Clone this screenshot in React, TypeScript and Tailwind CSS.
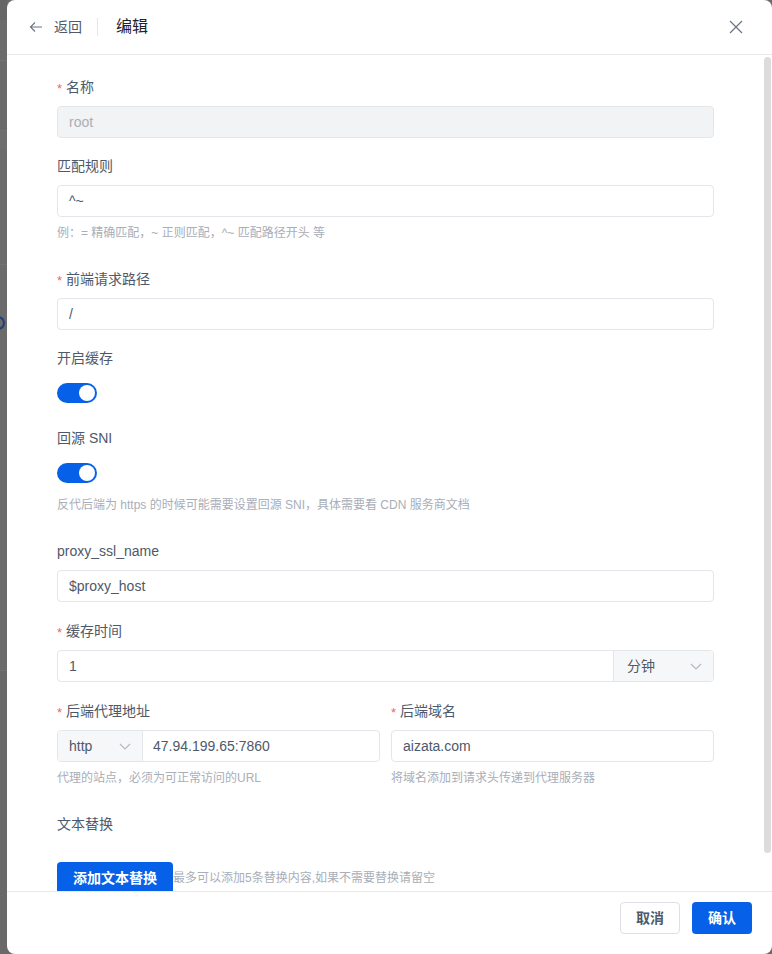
import React from "react";

function Label({ required, children }: { required?: boolean; children: React.ReactNode }) {
  return (
    <div className="h-[22px] leading-[22px] text-[14px] text-[#4e5969] mb-[8px] flex items-center">
      {required && <span className="text-[#f76560] text-[13px] mr-[4px] leading-none mt-[2px]">*</span>}
      <span>{children}</span>
    </div>
  );
}

function Help({ children }: { children: React.ReactNode }) {
  return <div className="mt-[6px] h-[20px] leading-[20px] text-[12px] text-[#a9aeb8]">{children}</div>;
}

function Chevron() {
  return (
    <svg width="12" height="7" viewBox="0 0 12 7" fill="none">
      <path d="M1 1 L6 6 L11 1" stroke="#b4b8bf" strokeWidth="1.1" />
    </svg>
  );
}

function Input({ value, disabled }: { value: string; disabled?: boolean }) {
  return (
    <div
      className={
        disabled
          ? "h-[32px] border border-[#e5e6eb] rounded-[4px] px-[11px] flex items-center text-[14px] text-[#a9aeb8] bg-[#f2f3f5]"
          : "h-[32px] border border-[#e5e6eb] rounded-[4px] px-[11px] flex items-center text-[14px] text-[#4e5969] bg-white"
      }
    >
      {value}
    </div>
  );
}

function Switch() {
  return (
    <div className="h-[32px] flex items-center">
      <div className="w-[40px] h-[20px] rounded-full bg-[#0661e8] flex items-center justify-end pr-[2px]">
        <div className="w-[16px] h-[16px] rounded-full bg-white" />
      </div>
    </div>
  );
}

export default function App() {
  return (
    <div className="h-[954px] w-[772px] flex bg-[#6b6b6b] overflow-hidden font-['Liberation_Sans','Noto_Sans_CJK_SC',sans-serif]">
      <div className="w-[7px] shrink-0 flex flex-col overflow-hidden">
        <div className="h-[20px] bg-[#666666]" />
        <div className="h-[41px] bg-[#6c6c6c] border-b border-[#747474]" />
        <div className="h-[70px] bg-[#6a6a6a] border-b border-[#727272]" />
        <div className="h-[18px] bg-[#6e6e6e]" />
        <div className="h-[116px] bg-[#6b6b6b] border-b border-[#727272]" />
        <div className="h-[50px] bg-[#6b6b6b]" />
        <div className="h-[16px] flex items-center">
          <div className="w-[14px] h-[14px] rounded-full border-2 border-[#1f3f7a] ml-[-9px] shrink-0" />
        </div>
        <div className="h-[340px] bg-[#6b6b6b] border-b border-[#727272]" />
        <div className="flex-1 bg-[#696969]" />
      </div>
      <div className="flex-1 bg-white rounded-[8px] flex flex-col overflow-hidden">
        <div className="h-[55px] shrink-0 border-b border-[#e8e9ec] flex items-center pl-[22px] pr-[29px]">
          <svg width="14" height="12" viewBox="0 0 14 12" fill="none" className="mr-[11px]">
            <path d="M13 6 H1.5 M6 1.5 L1.5 6 L6 10.5" stroke="#6b7280" strokeWidth="1.1" />
          </svg>
          <span className="text-[14px] text-[#4e5969]">返回</span>
          <div className="w-px h-[18px] bg-[#e5e6eb] ml-[15px] mr-[18px]" />
          <span className="text-[16px] text-[#1d2129]">编辑</span>
          <div className="flex-1" />
          <svg width="14" height="14" viewBox="0 0 14 14" fill="none">
            <path d="M1 1 L13 13 M13 1 L1 13" stroke="#6b7280" strokeWidth="1.2" />
          </svg>
        </div>
        <div className="flex-1 flex overflow-hidden">
          <div className="flex-1 overflow-hidden pl-[50px] pr-[50px] pt-[21px]">
            <div className="mb-[17px]">
              <Label required>名称</Label>
              <Input value="root" disabled />
            </div>
            <div className="mb-[25px]">
              <Label>匹配规则</Label>
              <Input value="^~" />
              <Help>例：= 精确匹配，~ 正则匹配，^~ 匹配路径开头 等</Help>
            </div>
            <div className="mb-[17px]">
              <Label required>前端请求路径</Label>
              <Input value="/" />
            </div>
            <div className="mb-[18px]">
              <Label>开启缓存</Label>
              <Switch />
            </div>
            <div className="mb-[25px]">
              <Label>回源 SNI</Label>
              <Switch />
              <Help>反代后端为 https 的时候可能需要设置回源 SNI，具体需要看 CDN 服务商文档</Help>
            </div>
            <div className="mb-[18px]">
              <Label>proxy_ssl_name</Label>
              <Input value="$proxy_host" />
            </div>
            <div className="mb-[18px]">
              <Label required>缓存时间</Label>
              <div className="h-[32px] flex border border-[#e5e6eb] rounded-[4px] overflow-hidden">
                <div className="flex-1 px-[11px] flex items-center text-[14px] text-[#4e5969]">1</div>
                <div className="w-[100px] bg-[#f6f7f9] border-l border-[#e5e6eb] flex items-center justify-between pl-[13px] pr-[11px] text-[14px] text-[#4e5969]">
                  <span>分钟</span>
                  <Chevron />
                </div>
              </div>
            </div>
            <div className="mb-[25px] grid grid-cols-2 gap-x-[11px]">
              <div>
                <Label required>后端代理地址</Label>
                <div className="h-[32px] flex border border-[#e5e6eb] rounded-[4px] overflow-hidden">
                  <div className="w-[85px] bg-[#f6f7f9] border-r border-[#e5e6eb] flex items-center justify-between pl-[11px] pr-[11px] text-[14px] text-[#4e5969]">
                    <span>http</span>
                    <Chevron />
                  </div>
                  <div className="flex-1 px-[10px] flex items-center text-[14px] text-[#4e5969]">47.94.199.65:7860</div>
                </div>
                <Help>代理的站点，必须为可正常访问的URL</Help>
              </div>
              <div>
                <Label required>后端域名</Label>
                <Input value="aizata.com" />
                <Help>将域名添加到请求头传递到代理服务器</Help>
              </div>
            </div>
            <div>
              <Label>文本替换</Label>
              <div className="mt-[27px] flex items-center">
                <div className="h-[32px] px-[16px] bg-[#0661e8] rounded-[4px] text-white text-[14px] font-bold flex items-center">
                  添加文本替换
                </div>
                <span className="text-[12px] text-[#a9aeb8]">最多可以添加5条替换内容,如果不需要替换请留空</span>
              </div>
            </div>
          </div>
          <div className="w-[8px] shrink-0 pt-[2px] pr-[1px]">
            <div className="h-[796px] rounded-full bg-[#dcdcdc]" />
          </div>
        </div>
        <div className="h-[63px] shrink-0 border-t border-[#e8e9ec] flex justify-end gap-[12px] pt-[10px] pr-[20px]">
          <div className="w-[60px] h-[32px] border border-[#dcdfe6] rounded-[4px] flex items-center justify-center text-[14px] text-[#4e5969] font-semibold">
            取消
          </div>
          <div className="w-[60px] h-[32px] bg-[#0661e8] rounded-[4px] flex items-center justify-center text-[14px] text-white font-bold">
            确认
          </div>
        </div>
      </div>
    </div>
  );
}
